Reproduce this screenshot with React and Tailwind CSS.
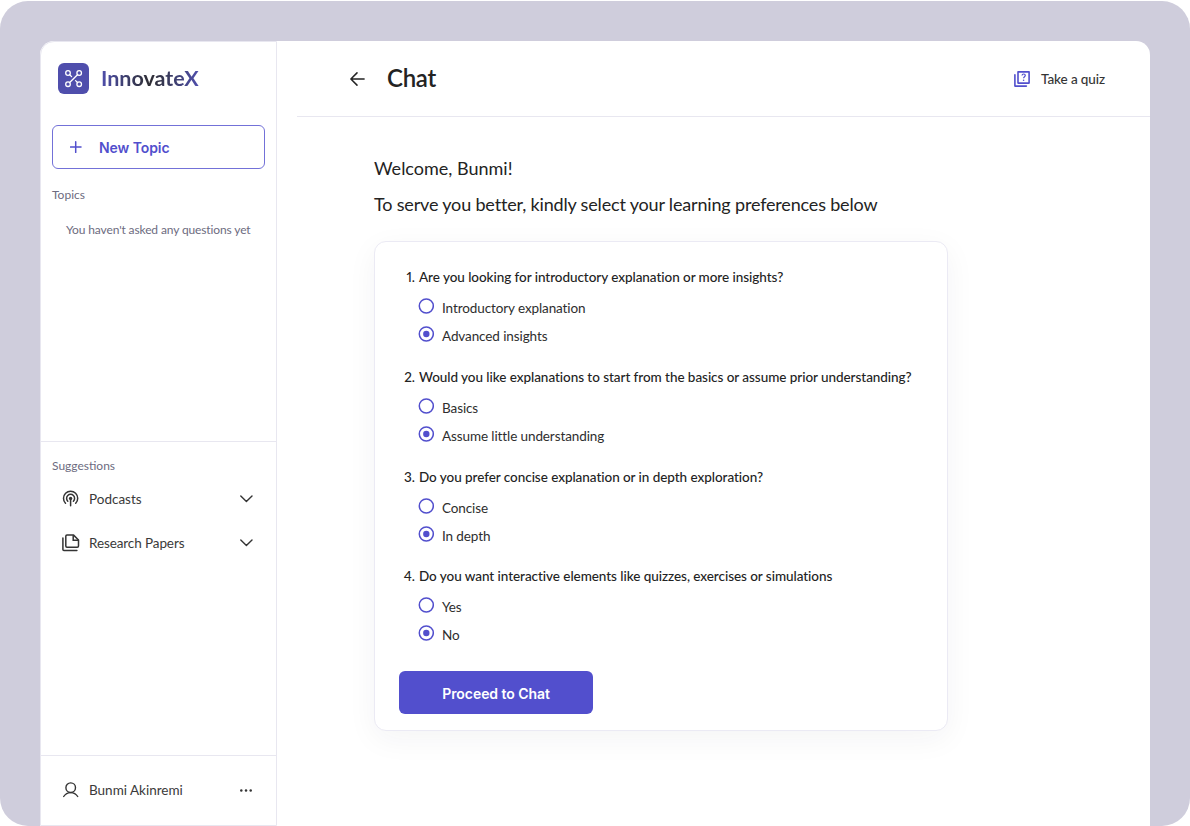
import React from "react";

const questions = [
  { text: "Are you looking for introductory explanation or more insights?", options: ["Introductory explanation", "Advanced insights"] },
  { text: "Would you like explanations to start from the basics or assume prior understanding?", options: ["Basics", "Assume little understanding"] },
  { text: "Do you prefer concise explanation or in depth exploration?", options: ["Concise", "In depth"] },
  { text: "Do you want interactive elements like quizzes, exercises or simulations", options: ["Yes", "No"] },
];

function LogoMark() {
  return (
    <svg className="size-[31px] shrink-0" viewBox="0 0 31 31" fill="none" stroke="white" strokeWidth="1.3" strokeLinecap="round">
      <rect width="31" height="31" rx="6" fill="#4f4eac" stroke="none" />
      <circle cx="10" cy="10" r="2.3" />
      <circle cx="21.2" cy="10" r="2.3" />
      <circle cx="10" cy="21.2" r="2.3" />
      <circle cx="21.2" cy="21.2" r="2.3" />
      <path d="M19.5 11.7 11.7 19.500M11.700 11.700 13.600 13.600M17.600 17.600l1.900 1.900" />
    </svg>
  );
}

function PlusIcon() {
  return (
    <svg className="size-3 shrink-0" viewBox="0 0 12 12" fill="none" stroke="#524fcd" strokeWidth="1.5" strokeLinecap="round">
      <path d="M5.700 .8v10.600M.4 6.100h10.600" />
    </svg>
  );
}

function PodcastIcon() {
  return (
    <svg className="size-[18px] shrink-0" viewBox="0 0 18 18" fill="none" stroke="#343434" strokeWidth="1.5" strokeLinecap="round">
      <path d="M3.500 13.200a7.100 7.100 0 1 1 10.200 0" />
      <path d="M5.800 11.200a4 4 0 1 1 5.600 0" />
      <circle cx="8.600" cy="8.400" r="1.700" fill="#343434" stroke="none" />
      <path d="M8.600 9v6.800" />
    </svg>
  );
}

function PapersIcon() {
  return (
    <svg className="size-[18px] shrink-0" viewBox="0 0 18 18" fill="none" stroke="#343434" strokeWidth="1.5">
      <path d="M11.600 1.100H5a1.200 1.200 0 0 0-1.200 1.200v9.800A1.200 1.200 0 0 0 5 13.300h10.300a1.200 1.200 0 0 0 1.200-1.200V6z" strokeLinejoin="round" />
      <path d="M11.200 1.300v5h5" />
      <path d="M.9 4v11.600a1 1 0 0 0 1 1h13" strokeLinecap="round" />
    </svg>
  );
}

function Chevron() {
  return (
    <svg className="h-2 w-[13px] shrink-0" viewBox="0 0 13 8" fill="none" stroke="#343434" strokeWidth="1.400" strokeLinecap="round" strokeLinejoin="round">
      <path d="M.8 1 6.400 6.600 12 1" />
    </svg>
  );
}

function UserIcon() {
  return (
    <svg className="size-[18px] shrink-0" viewBox="0 0 18 18" fill="none" stroke="#343434" strokeWidth="1.400" strokeLinecap="round">
      <circle cx="8.700" cy="6.700" r="4.800" />
      <path d="M1.700 15.500C3.400 12.800 5.700 11.600 8.700 11.600s5.300 1.200 7 3.900" />
    </svg>
  );
}

function QuizIcon() {
  return (
    <svg className="size-4 shrink-0" viewBox="0 0 16 16" fill="none" stroke="#524fcd" strokeWidth="1.600" strokeLinejoin="round">
      <path d="M4 .9h11.100v11.200H4z" />
      <path d="M.9 3.700v11.400h11.500" strokeLinecap="round" />
      <path d="M8 4.500c.1-1 .7-1.500 1.600-1.500s1.700.6 1.700 1.500c0 1.200-1.700 1.300-1.700 2.800" strokeWidth="1.200" />
      <circle cx="9.600" cy="9.300" r=".8" fill="#524fcd" stroke="none" />
    </svg>
  );
}

function BackIcon() {
  return (
    <svg className="h-[14px] w-[15px] shrink-0" viewBox="0 0 15 14" fill="none" stroke="#232323" strokeWidth="1.500" strokeLinecap="round" strokeLinejoin="round">
      <path d="M14.100 7H1.100M7 .9.9 7 7 13.100" />
    </svg>
  );
}

function Radio({ checked }) {
  return (
    <svg className="size-4 shrink-0" viewBox="0 0 16 16" fill="none">
      <circle cx="8.300" cy="8" r="7" stroke="#524fcd" strokeWidth="1.500" />
      {checked && <circle cx="8.300" cy="8" r="3.200" fill="#524fcd" />}
    </svg>
  );
}

function Sidebar() {
  return (
    <aside className="flex w-[237px] shrink-0 flex-col rounded-tl-[14px] border border-[#e8e7f0] text-[13.5px] text-[#3a3a3a]">
      <div className="flex h-[399px] flex-col px-[11px] pt-[21px]">
        <div className="flex items-center gap-3 pl-[6px]">
          <LogoMark />
          <span className="bg-linear-to-r from-[#4f4eac] via-[#2e2d33] to-[#4f4eac] bg-clip-text pb-px text-[21.5px] leading-[30px] font-bold text-transparent">InnovateX</span>
        </div>
        <button className="mt-[31px] flex h-11 w-[213px] items-center rounded-md border border-[#7371d8] pl-[17px] font-['Inter',sans-serif] text-[14px] font-semibold tracking-[-0.08px] text-[#524fcd]">
          <PlusIcon />
          <span className="pt-px pl-[17px]">New Topic</span>
        </button>
        <h2 className="mt-[18px] text-[12px] leading-4 text-[#6d6b80]">Topics</h2>
        <p className="mt-[19px] pl-[14px] text-[12px] leading-4 tracking-[-0.12px] whitespace-nowrap text-[#6d6b80]">You haven't asked any questions yet</p>
      </div>
      <div className="flex h-[314px] flex-col border-t border-[#e8e7f0] px-[11px] pt-4">
        <h2 className="text-[12px] leading-4 text-[#6d6b80]">Suggestions</h2>
        <div className="mt-[15px] flex h-5 items-center pr-[12px] pl-[10px]">
          <PodcastIcon />
          <span className="flex-1 pl-[9px]">Podcasts</span>
          <Chevron />
        </div>
        <div className="mt-[24px] flex h-5 items-center pr-[12px] pl-[10px]">
          <PapersIcon />
          <span className="flex-1 pl-[9px] tracking-[-0.1px]">Research Papers</span>
          <Chevron />
        </div>
      </div>
      <div className="flex flex-1 items-center border-t border-[#e8e7f0] pr-[24px] pb-px pl-[21px]">
        <UserIcon />
        <span className="flex-1 pl-[9px]">Bunmi Akinremi</span>
        <svg className="h-[3px] w-3" viewBox="0 0 12 3" fill="#343434">
          <circle cx="1.300" cy="1.500" r="1.250" />
          <circle cx="6" cy="1.500" r="1.250" />
          <circle cx="10.700" cy="1.500" r="1.250" />
        </svg>
      </div>
    </aside>
  );
}

function Preferences() {
  return (
    <section className="mt-[25px] h-[490px] w-[574px] rounded-xl border border-[#ebeaf4] bg-white pt-[25px] pl-6 shadow-[0_8px_30px_rgba(30,30,50,0.05)]">
      <ol className="flex flex-col gap-[19.8px]">
        {questions.map((q, i) => (
          <li key={q.text} className="h-20">
            <div className="flex text-[13.5px] leading-5 font-medium tracking-[-0.05px] whitespace-nowrap text-[#232323]">
              <span className="w-4 text-right proportional-nums">{i + 1}.</span>
              <span className="pl-[4px]">{q.text}</span>
            </div>
            <div className="flex flex-col gap-[8px] pt-[11px] pl-[19px]">
              {q.options.map((o, j) => (
                <label key={o} className="flex h-5 items-start gap-[8px] text-[13.5px] leading-5 tracking-[-0.1px] text-[#2e2e2e]">
                  <Radio checked={j === 1} />
                  {o}
                </label>
              ))}
            </div>
          </li>
        ))}
      </ol>
      <button className="mt-[25px] h-[43px] w-[194px] rounded-md bg-[#524fcd] pt-0.5 font-['Inter',sans-serif] text-[14px] font-semibold tracking-[-0.06px] text-white">Proceed to Chat</button>
    </section>
  );
}

export default function App() {
  return (
    <div className="h-[826px] w-[1190px] overflow-hidden bg-white pt-px font-['Lato',sans-serif]">
      <div className="h-[825px] rounded-[28px] bg-[#cfcddc] px-10 pt-10">
        <div className="flex h-[785px] rounded-t-[14px] bg-white">
          <Sidebar />
          <main className="flex-1 pl-5">
            <header className="flex h-[76px] items-center border-b border-[#e8e7f0] pr-[45px] pl-[53px]">
              <BackIcon />
              <h1 className="flex-1 pb-px pl-[22px] text-[24px] font-semibold tracking-[-0.3px] text-[#232323]">Chat</h1>
              <QuizIcon />
              <span className="pt-0.5 pl-[11px] text-[13.5px] font-medium tracking-[-0.1px] text-[#343434]">Take a quiz</span>
            </header>
            <div className="pt-[39px] pl-[77px] text-[18px] leading-6 text-[#232323]">
              <p>Welcome, Bunmi!</p>
              <p className="mt-3 tracking-[-0.17px]">To serve you better, kindly select your learning preferences below</p>
              <Preferences />
            </div>
          </main>
        </div>
      </div>
    </div>
  );
}
